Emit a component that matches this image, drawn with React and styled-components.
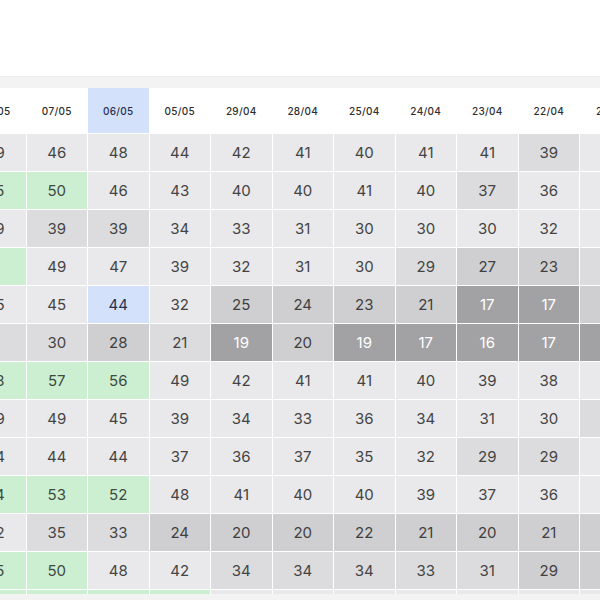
import React from 'react'
import styled, { createGlobalStyle } from 'styled-components'

const GlobalStyle = createGlobalStyle`
  html, body {
    margin: 0;
    padding: 0;
    background: #ffffff;
    font-family: Inter, "Noto Sans", sans-serif;
  }
`

const dates = ['08/05', '07/05', '06/05', '05/05', '29/04', '28/04', '25/04', '24/04', '23/04', '22/04', '21/04']
const activeDate = '06/05'

// each row: values per column, then a tone letter per cell
// l = light, m = mid, d = dark, x = deepest, g = green, b = blue
const rows = [
  [[49, 46, 48, 44, 42, 41, 40, 41, 41, 39, 40], 'lllllllllml'],
  [[55, 50, 46, 43, 40, 40, 41, 40, 37, 36, 38], 'ggllllllmll'],
  [[39, 39, 39, 34, 33, 31, 30, 30, 30, 32, 31], 'lmmllllllll'],
  [['', 49, 47, 39, 32, 31, 30, 29, 27, 23, 24], 'gllllllmddm'],
  [[45, 45, 44, 32, 25, 24, 23, 21, 17, 17, 20], 'llblddddxxd'],
  [['', 30, 28, 21, 19, 20, 19, 17, 16, 17, 15], 'mmdmxdxxxxx'],
  [[58, 57, 56, 49, 42, 41, 41, 40, 39, 38, 39], 'gggllllllll'],
  [[49, 49, 45, 39, 34, 33, 36, 34, 31, 30, 29], 'llllllllllm'],
  [[44, 44, 44, 37, 36, 37, 35, 32, 29, 29, 33], 'llllllllmml'],
  [[54, 53, 52, 48, 41, 40, 40, 39, 37, 36, 38], 'gggllllllll'],
  [[42, 35, 33, 24, 20, 20, 22, 21, 20, 21, 19], 'lmmdddddddd'],
  [[55, 50, 48, 42, 34, 34, 34, 33, 31, 29, 28], 'ggllmmmmmdd'],
  [[56, 55, 53, 47, 40, 39, 38, 37, 35, 34, 33], 'gggglllllll'],
]

const tones = {
  l: { bg: '#e9e9eb', fg: '#444444' },
  m: { bg: '#dcdcde', fg: '#444444' },
  d: { bg: '#cfcfd1', fg: '#404040' },
  x: { bg: '#a2a2a4', fg: '#ffffff' },
  g: { bg: '#ccefd1', fg: '#3f4a40' },
  b: { bg: '#d4e1fa', fg: '#27324f' },
}

export default function App() {
  return (
    <>
      <GlobalStyle />
      <Page>
        <TopArea />
        <Panel>
          <TableViewport>
            <Grid>
              {dates.map(d => (
                <HeadCell key={d} $active={d === activeDate}>{d}</HeadCell>
              ))}
              {rows.map(([values, toneStr], r) =>
                values.map((v, c) => {
                  const t = tones[toneStr[c]] || tones.l
                  return (
                    <Cell key={r + '-' + c} $bg={t.bg} $fg={t.fg}>{v}</Cell>
                  )
                })
              )}
            </Grid>
          </TableViewport>
        </Panel>
      </Page>
    </>
  )
}

const Page = styled.div`
  width: 600px;
  height: 600px;
  overflow: hidden;
  display: flex;
  flex-direction: column;
  background: #ffffff;
`

const TopArea = styled.div`
  height: 76px;
  flex: none;
  background: #ffffff;
  border-bottom: 1px solid #ebebeb;
`

const Panel = styled.div`
  flex: 1;
  background: #f3f3f4;
  padding-top: 11px;
`

const TableViewport = styled.div`
  height: 506px;
  overflow: hidden;
  background: #ffffff;
`

const Grid = styled.div`
  display: grid;
  grid-template-columns: repeat(11, 60.5px);
  grid-template-rows: 45px;
  grid-auto-rows: 37px;
  gap: 1px;
  background: #ffffff;
  margin-left: -35px;
  width: max-content;
`

const HeadCell = styled.div`
  display: flex;
  align-items: center;
  justify-content: center;
  background: ${p => (p.$active ? '#d4e1fa' : '#ffffff')};
  color: ${p => (p.$active ? '#27324f' : '#2e2e2e')};
  font-size: 10px;
  font-weight: 500;
  letter-spacing: 0.3px;
`

const Cell = styled.div`
  display: flex;
  align-items: center;
  justify-content: center;
  background: ${p => p.$bg};
  color: ${p => p.$fg};
  font-size: 15px;
  font-weight: 400;
`
